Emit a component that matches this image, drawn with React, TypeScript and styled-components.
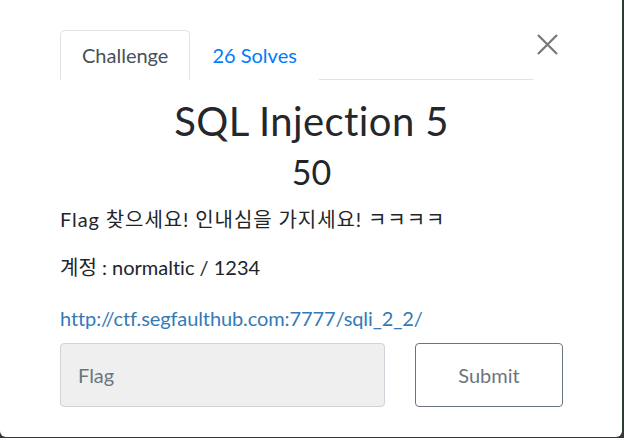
import React from 'react';
import styled, { createGlobalStyle } from 'styled-components';

const GlobalStyle = createGlobalStyle`
  html, body {
    margin: 0;
    padding: 0;
    background: #2f3d30;
    font-family: Lato, "Noto Sans CJK KR", sans-serif;
    font-variant-ligatures: none;
  }
`;

const Modal = styled.div`
  width: 622px;
  height: 437px;
  box-sizing: border-box;
  background: #ffffff;
  border-radius: 0 0 6px 6px;
  padding: 30px 59px 0 60px;
  color: #212529;
`;

const Header = styled.div`
  display: flex;
  align-items: flex-start;
`;

const Tabs = styled.div`
  display: flex;
  width: 473px;
  border-bottom: 1px solid #dee2e6;
`;

const Tab = styled.div<{ $active?: boolean }>`
  height: 50px;
  box-sizing: border-box;
  padding: 0 21px;
  display: flex;
  align-items: center;
  font-size: 20px;
  margin-bottom: -1px;
  border: 1px solid ${p => (p.$active ? '#dee2e6' : 'transparent')};
  border-bottom-color: ${p => (p.$active ? '#ffffff' : 'transparent')};
  border-radius: 5px 5px 0 0;
  background: #fff;
  color: ${p => (p.$active ? '#495057' : '#007bff')};
`;

const CloseButton = styled.div`
  margin: 4px 0 0 4px;
  width: 21px;
  height: 21px;
  color: #777;
`;

const Title = styled.h2`
  margin: 17px 0 0;
  text-align: center;
  font-weight: 400;
  font-size: 40px;
  letter-spacing: 0.4px;
  line-height: 48px;
  color: #24272b;
`;

const Value = styled.h3`
  margin: 6px 0 0;
  text-align: center;
  font-weight: 400;
  font-size: 34px;
  line-height: 41px;
`;

const Text = styled.p<{ $gap: number; $spacing?: number }>`
  margin: ${p => p.$gap}px 0 0;
  font-size: 20px;
  line-height: 30px;
  letter-spacing: ${p => p.$spacing ?? 0}px;
  color: #212529;
`;

const Link = styled.a`
  display: block;
  margin-top: 21px;
  font-size: 20px;
  line-height: 30px;
  letter-spacing: -0.1px;
  color: #337ab7;
  text-decoration: none;
`;

const Row = styled.div`
  display: flex;
  gap: 30px;
  margin-top: 10px;
`;

const Input = styled.div`
  width: 325px;
  height: 64px;
  box-sizing: border-box;
  background: #efefef;
  border: 1px solid #ced4da;
  border-radius: 4px;
  display: flex;
  align-items: center;
  padding-left: 17px;
  font-size: 20px;
  color: #6c757d;
`;

const SubmitButton = styled.div`
  width: 148px;
  height: 64px;
  box-sizing: border-box;
  border: 1px solid #6c757d;
  border-radius: 4px;
  display: flex;
  align-items: center;
  justify-content: center;
  font-size: 20px;
  color: #6c757d;
`;

const App: React.FC = () => (
  <>
    <GlobalStyle />
    <Modal>
      <Header>
        <Tabs>
          <Tab $active>Challenge</Tab>
          <Tab>26 Solves</Tab>
        </Tabs>
        <CloseButton>
          <svg width="21" height="21" viewBox="0 0 21 21">
            <path d="M1 1L20 20M20 1L1 20" stroke="currentColor" strokeWidth="2.2" />
          </svg>
        </CloseButton>
      </Header>
      <Title>SQL Injection 5</Title>
      <Value>50</Value>
      <Text $gap={12} $spacing={0.9}>Flag 찾으세요! 인내심을 가지세요! ㅋㅋㅋㅋ</Text>
      <Text $gap={18}>계정 : normaltic / 1234</Text>
      <Link href="#">http://ctf.segfaulthub.com:7777/sqli_2_2/</Link>
      <Row>
        <Input>Flag</Input>
        <SubmitButton>Submit</SubmitButton>
      </Row>
    </Modal>
  </>
);

export default App;
